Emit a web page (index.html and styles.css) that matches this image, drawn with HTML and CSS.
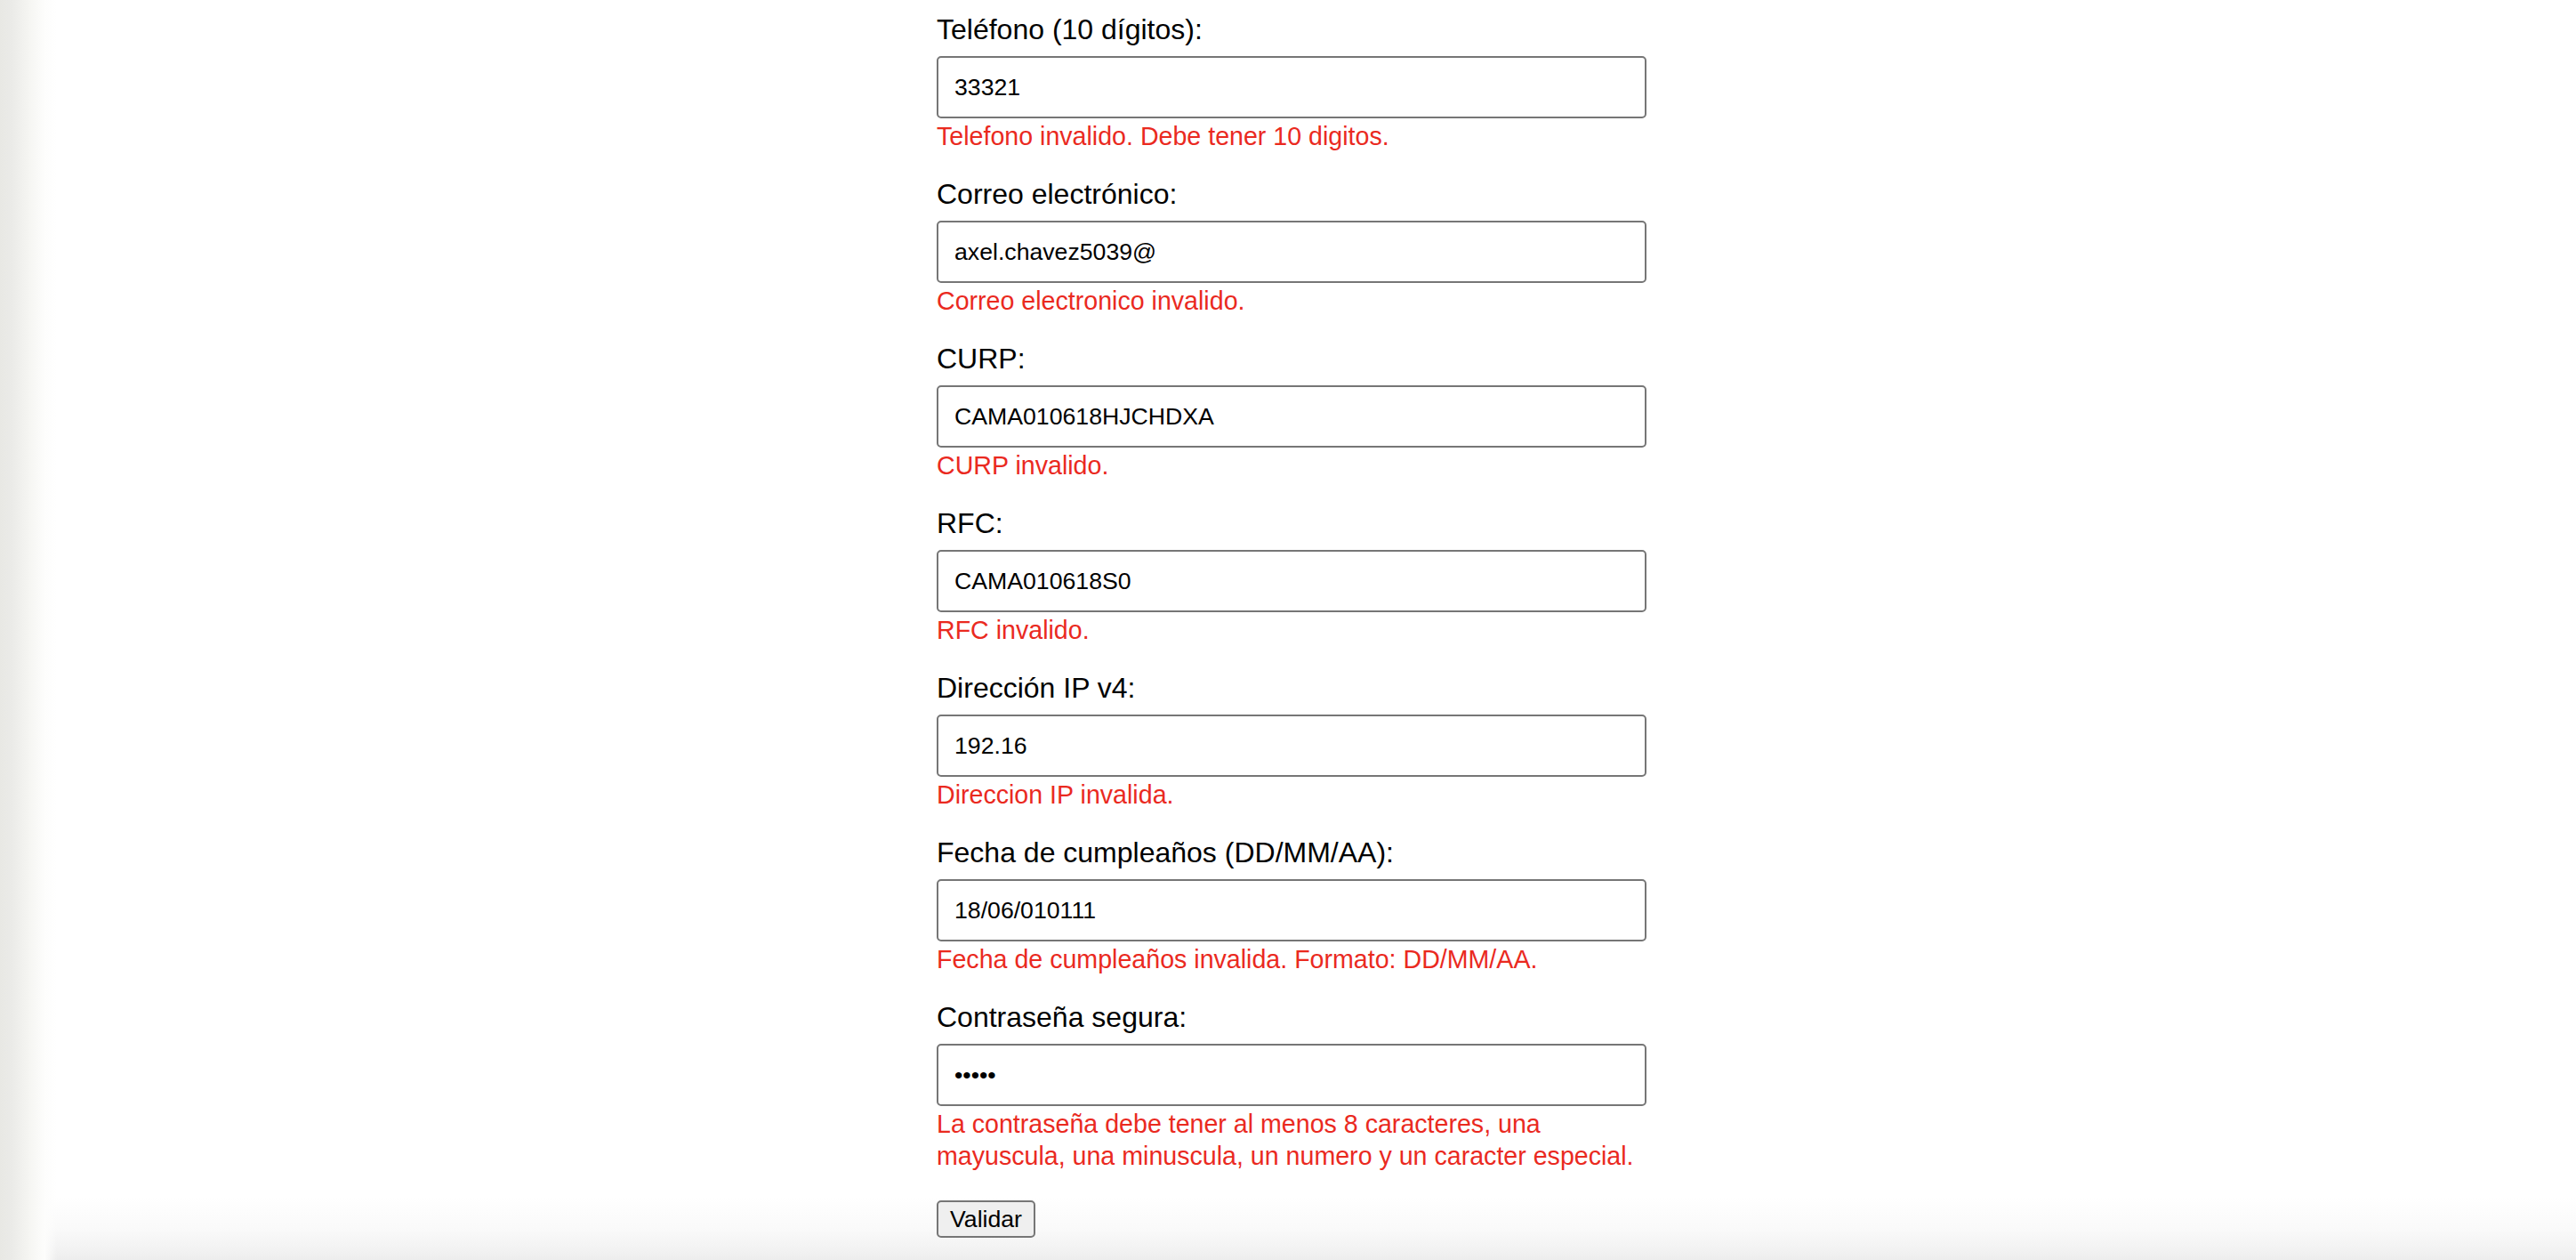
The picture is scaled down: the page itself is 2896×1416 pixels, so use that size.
FILE: index.html
```html
<!DOCTYPE html>
<html lang="es">
<head>
<meta charset="utf-8">
<title>Validación de formulario</title>
<link rel="stylesheet" href="styles.css">
</head>
<body>
<main class="page">
  <form class="form">
    <div class="field">
      <label class="label">Teléfono (10 dígitos):</label>
      <input class="input" type="text" value="33321">
      <div class="error">Telefono invalido. Debe tener 10 digitos.</div>
    </div>
    <div class="field">
      <label class="label">Correo electrónico:</label>
      <input class="input" type="text" value="axel.chavez5039@">
      <div class="error">Correo electronico invalido.</div>
    </div>
    <div class="field">
      <label class="label">CURP:</label>
      <input class="input" type="text" value="CAMA010618HJCHDXA">
      <div class="error">CURP invalido.</div>
    </div>
    <div class="field">
      <label class="label">RFC:</label>
      <input class="input" type="text" value="CAMA010618S0">
      <div class="error">RFC invalido.</div>
    </div>
    <div class="field">
      <label class="label">Dirección IP v4:</label>
      <input class="input" type="text" value="192.16">
      <div class="error">Direccion IP invalida.</div>
    </div>
    <div class="field">
      <label class="label">Fecha de cumpleaños (DD/MM/AA):</label>
      <input class="input" type="text" value="18/06/010111">
      <div class="error">Fecha de cumpleaños invalida. Formato: DD/MM/AA.</div>
    </div>
    <div class="field">
      <label class="label">Contraseña segura:</label>
      <input class="input" type="password" value="12345">
      <div class="error">La contraseña debe tener al menos 8 caracteres, una mayuscula, una minuscula, un numero y un caracter especial.</div>
    </div>
    <button class="button" type="button">Validar</button>
  </form>
</main>
</body>
</html>
```
FILE: styles.css
```css
html, body {
  margin: 0;
  padding: 0;
  height: 100%;
  overflow: hidden;
}

html {
  background: #ffffff;
}

body {
  font-family: "Liberation Sans", Arial, sans-serif;
  color: #000;
  background:
    linear-gradient(to right, #e8e8e4 0px, #ebebe8 14px, #f6f6f3 34px, #fdfdfc 50px, rgba(255,255,255,0) 64px),
    linear-gradient(to bottom, rgba(238,238,238,0) 0px, rgba(238,238,238,0) calc(100% - 70px), rgba(240,240,240,0.35) calc(100% - 35px), rgba(238,238,238,0.75) calc(100% - 12px), #ededed 100%),
    #ffffff;
}

.page {
  display: flex;
  justify-content: center;
  padding-left: 8px;
  padding-top: 15px;
}

.form {
  width: 798px;
  display: flex;
  flex-direction: column;
  align-items: flex-start;
}

.field {
  width: 100%;
  margin-bottom: 29px;
}

.label {
  display: block;
  font-size: 32px;
  line-height: 37px;
  margin-bottom: 11px;
}

.input {
  display: block;
  box-sizing: border-box;
  width: 100%;
  height: 70px;
  margin: 0;
  padding: 0 18px;
  border: 2px solid #767676;
  border-radius: 5px;
  font-family: "Liberation Sans", Arial, sans-serif;
  font-size: 26.67px;
  color: #000;
  background: #fff;
  outline: none;
}

.error {
  margin-top: 2px;
  font-size: 28.6px;
  line-height: 36px;
  color: #ea2a1f;
}

.button {
  margin-top: 3px;
  box-sizing: border-box;
  width: 111px;
  height: 42px;
  padding: 0;
  font-family: "Liberation Sans", Arial, sans-serif;
  font-size: 26.67px;
  line-height: 38px;
  border: 2px solid #767676;
  border-radius: 5px;
  background: #efefef;
  color: #000;
}
```
